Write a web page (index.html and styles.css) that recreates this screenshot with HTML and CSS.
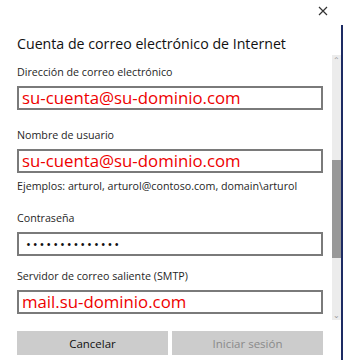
FILE: index.html
```html
<!DOCTYPE html>
<html lang="es">
<head>
  <meta charset="UTF-8">
  <title>Cuenta de correo electrónico de Internet</title>
  <link rel="stylesheet" href="styles.css">
</head>
<body>

  <div class="window">
    <div class="dialog">
      <div class="topbar">
        <button class="close" aria-label="Cerrar">
          <svg width="10" height="10" viewBox="0 0 10 10">
            <path d="M1 1 L9 9 M9 1 L1 9" stroke="#333" stroke-width="1.2" fill="none"/>
          </svg>
        </button>
      </div>

      <h1>Cuenta de correo electrónico de Internet</h1>

      <div class="body">
        <div class="form">
          <label class="label">Dirección de correo electrónico</label>
          <div class="field"><span class="value">su-cuenta@su-dominio.com</span></div>

          <label class="label">Nombre de usuario</label>
          <div class="field with-hint"><span class="value">su-cuenta@su-dominio.com</span></div>
          <div class="hint">Ejemplos: arturol, arturol@contoso.com, domain\arturol</div>

          <label class="label">Contraseña</label>
          <div class="field password"><span class="dots">••••••••••••••</span></div>

          <label class="label">Servidor de correo saliente (SMTP)</label>
          <div class="field last"><span class="value">mail.su-dominio.com</span></div>
        </div>

        <div class="scrollbar">
          <div class="arrow">&#8963;</div>
          <div class="track">
            <div class="thumb"></div>
          </div>
          <div class="arrow">&#8964;</div>
        </div>
      </div>

      <div class="buttons">
        <button class="btn">Cancelar</button>
        <button class="btn disabled">Iniciar sesión</button>
      </div>
    </div>
    <div class="edge"></div>
  </div>

</body>
</html>
```

FILE: styles.css
```css
body {
  margin: 0;
  background-color: #ffffff;
  font-family: "Open Sans", "Noto Sans", sans-serif;
  color: #1f1f1f;
}
.window {
  display: flex;
  height: 360px;
}
.dialog {
  flex: 1;
  display: flex;
  flex-direction: column;
}
.edge {
  width: 2px;
  margin-top: 25px;
  background-color: #1d2b63;
}
.topbar {
  height: 22px;
  display: flex;
  justify-content: flex-end;
  padding-right: 7px;
}
.close {
  border: none;
  background: none;
  padding: 0;
  width: 22px;
  height: 22px;
  display: flex;
  align-items: center;
  justify-content: center;
}
h1 {
  font-size: 14.2px;
  font-weight: normal;
  margin: 12px 0 0 17px;
  line-height: 20px;
  color: #111;
}
.body {
  display: flex;
  margin-top: 10px;
}
.form {
  flex: 1;
  padding-left: 17px;
  padding-right: 9px;
}
.label {
  display: block;
  font-size: 10.7px;
  line-height: 16px;
}
.field {
  box-sizing: border-box;
  margin-top: 6px;
  margin-bottom: 17px;
  height: 24px;
  border: 2px solid #7a7a7a;
  display: flex;
  align-items: center;
  padding-left: 3px;
}
.field.with-hint {
  margin-bottom: 5px;
}
.field.password {
  margin-bottom: 12px;
}
.field.last {
  margin-bottom: 0;
}
.value {
  color: #ee0000;
  font-size: 16.8px;
  line-height: 20px;
}
.dots {
  font-size: 13px;
  letter-spacing: 1.9px;
  padding-left: 4px;
  color: #111;
}
.hint {
  font-size: 10.7px;
  line-height: 16px;
  margin-bottom: 16px;
}
.scrollbar {
  width: 9px;
  height: 265px;
  margin-top: -9px;
  display: flex;
  flex-direction: column;
  background-color: #ececec;
}
.arrow {
  height: 10px;
  font-size: 8px;
  line-height: 10px;
  text-align: center;
  color: #999;
}
.track {
  flex: 1;
  padding-top: 95px;
}
.thumb {
  height: 98px;
  background-color: #999999;
}
.buttons {
  display: flex;
  gap: 4px;
  padding: 0 18px 0 17px;
  margin-top: 11px;
}
.btn {
  flex: 1;
  height: 24px;
  border: none;
  background-color: #cccccc;
  font-family: "Open Sans", "Noto Sans", sans-serif;
  font-size: 11.5px;
  color: #111;
}
.btn.disabled {
  color: #8a8a8a;
}
```
